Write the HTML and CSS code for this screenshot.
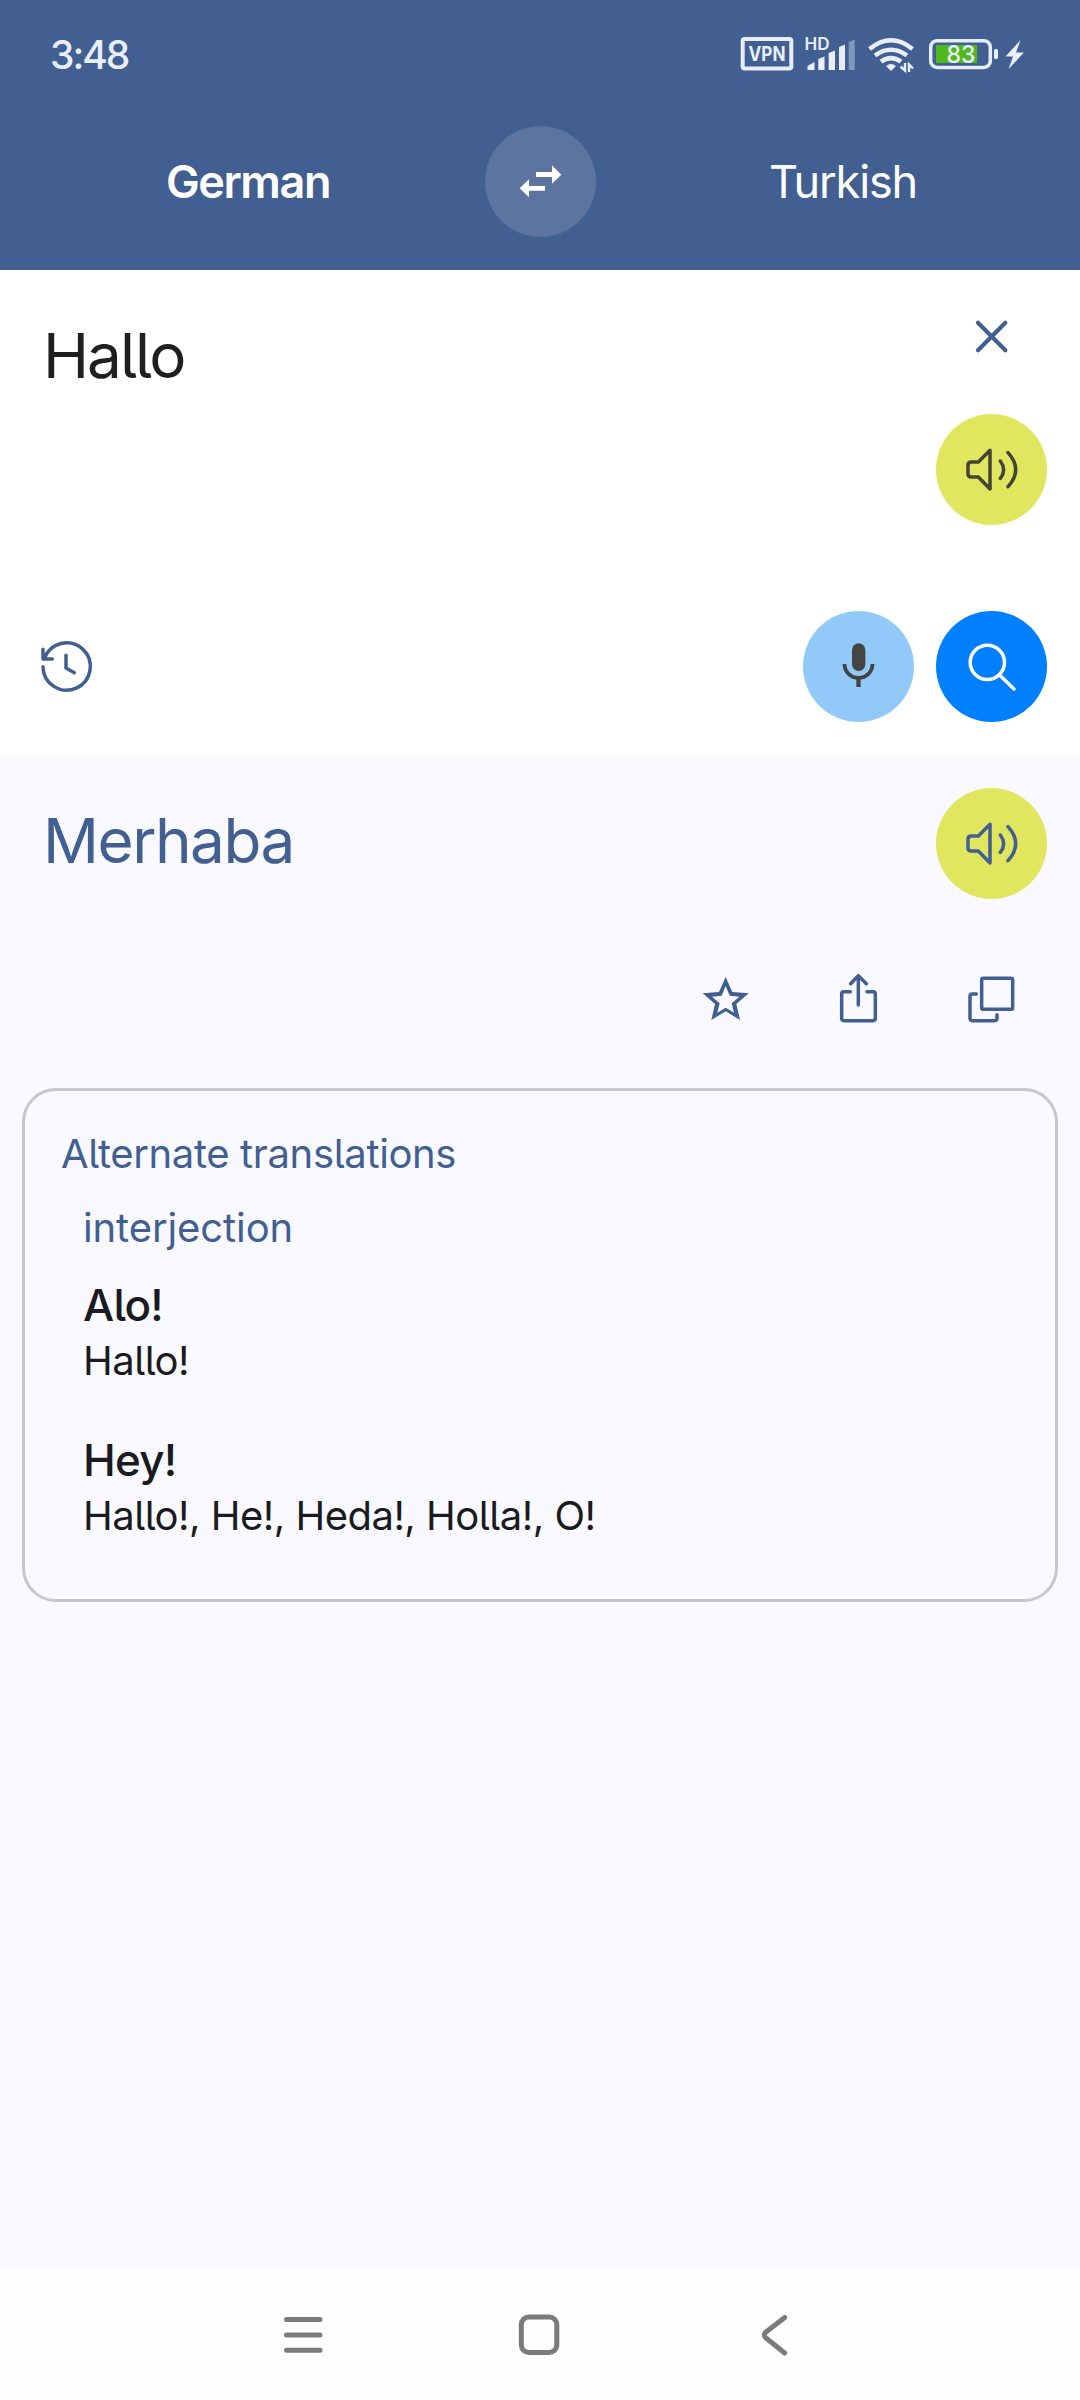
FILE: index.html
```html
<!DOCTYPE html>
<html lang="en">
<head>
<meta charset="utf-8">
<title>Translator</title>
<link rel="stylesheet" href="styles.css">
</head>
<body>
<div class="screen">
  <header class="header">
    <div class="status">
      <span class="time">3:48</span>
      <svg class="status-icons" viewBox="0 0 310 70">
        <rect x="22.7" y="18.9" width="48.6" height="29.6" rx="2" fill="none" stroke="currentColor" stroke-width="4"/>
        <text x="28.5" y="41" class="vpn" textLength="37" lengthAdjust="spacingAndGlyphs">VPN</text>
        <text x="84.5" y="30.2" class="hd" textLength="25" lengthAdjust="spacingAndGlyphs">HD</text>
        <path d="M87.5 50V46L94.5 42V50ZM98.3 50V39L104.5 36.5V50ZM108.7 50V33L115 30.5V50ZM119 50V27L125 24.5V50Z" fill="currentColor"/>
        <path d="M128.7 50V22L134.7 19.5V50Z" fill="currentColor" opacity=".4"/>
        <g fill="none" stroke="currentColor" stroke-width="4.6">
          <path d="M149.5 29Q171 11.5 192.5 29"/>
          <path d="M155 35.5Q171 24 187 35.5"/>
          <path d="M161 41.7Q171 34.5 181 41.7"/>
        </g>
        <path d="M166 46Q171 42 176 46L171 51Z" fill="currentColor"/>
        <path d="M185 43V50.5L180.5 46.5M189 52V44.5L193 48.5" fill="none" stroke="currentColor" stroke-width="2.4"/>
        <rect x="210.7" y="20.7" width="59.6" height="26.8" rx="6.5" fill="none" stroke="currentColor" stroke-width="3.5"/>
        <rect x="216" y="25" width="41" height="18" fill="#4fb81a"/>
        <text x="226.5" y="43" class="charge" textLength="29" lengthAdjust="spacingAndGlyphs">83</text>
        <rect x="274" y="29" width="4" height="10" rx="1.5" fill="currentColor"/>
        <path d="M300.5 20L285.5 36.5H293L288.5 49L304 32.5H296Z" fill="currentColor"/>
      </svg>
    </div>
    <div class="languages">
      <div class="lang lang-from">German</div>
      <svg class="round swap" viewBox="75 78 333 333"><path fill="currentColor" d="M228 216H276V196L304 224L276 251V231H228ZM255 258H207V238L179 265L207 292V272H255Z"/></svg>
      <div class="lang lang-to">Turkish</div>
    </div>
  </header>

  <section class="source">
    <div class="row">
      <p class="word">Hallo</p>
      <div class="stack">
        <svg class="cell" viewBox="108 -27 333 333"><path class="line clear" d="M234 98L316 181M316 98L234 181"/></svg>
        <svg class="round listen dark" viewBox="108 372 333 333"><path class="line" d="M270 481V597L235 561H214Q204 561 204 551V526Q204 516 214 516H235ZM301 513Q321 539 301 565M324 488Q370 539 324 590"/></svg>
      </div>
    </div>
    <div class="row tools">
      <svg class="cell" viewBox="33 3 333 333"><path class="line" d="M129 170A71 71 0 1 0 133 146M129 118V147H157M198 136V174L223 188"/></svg>
      <div class="pair">
        <svg class="round mic" viewBox="69 63 333 333"><rect x="216" y="160" width="40" height="83" rx="20" fill="currentColor"/><path fill="none" stroke="currentColor" stroke-width="11.5" d="M193.5 222A42 42 0 0 0 277.5 222"/><path fill="currentColor" d="M229 262H242V291H229Z"/></svg>
        <svg class="round search" viewBox="468 63 333 333"><circle class="line" cx="622" cy="217" r="51.5"/><path class="line" d="M661 257L702 297"/></svg>
      </div>
    </div>
  </section>

  <section class="result">
    <div class="row">
      <p class="word">Merhaba</p>
      <svg class="round listen" viewBox="108 372 333 333"><path class="line" d="M270 481V597L235 561H214Q204 561 204 551V526Q204 516 214 516H235ZM301 513Q321 539 301 565M324 488Q370 539 324 590"/></svg>
    </div>
    <div class="actions">
      <svg class="cell" viewBox="-30 9 333 333"><path fill="currentColor" fill-rule="evenodd" d="M137 111L157 156L206 160L169 192L180 240L137 214L94 240L105 192L68 160L117 156ZM137 138L149 167L178 170L155 190L162 218L137 203L112 218L119 190L96 170L125 167Z"/></svg>
      <svg class="cell" viewBox="369 9 333 333"><path class="line" d="M511 155H492Q485 155 485 162V235Q485 242 492 242H579Q586 242 586 235V162Q586 155 579 155H561M535 195V108M512 131L535 107L559 131"/></svg>
      <svg class="cell" viewBox="768 9 333 333"><rect class="line" x="905" y="115" width="93" height="93" rx="5"/><path class="line" d="M889 162H877Q870 162 870 169V235Q870 242 877 242H944Q951 242 951 235V224"/></svg>
    </div>
    <div class="card">
      <h2 class="card-title">Alternate translations</h2>
      <h3 class="part">interjection</h3>
      <div class="entry">
        <p class="term">Alo!</p>
        <p class="back">Hallo!</p>
      </div>
      <div class="entry">
        <p class="term">Hey!</p>
        <p class="back">Hallo!, He!, Heda!, Holla!, O!</p>
      </div>
    </div>
  </section>

  <nav class="nav">
    <svg class="nav-icon" viewBox="273 2305 60 60"><path d="M286.5 2319.5H320M286.5 2335H320M286.5 2350.3H320"/></svg>
    <svg class="nav-icon" viewBox="509 2305 60 60"><rect x="521.3" y="2317" width="35.5" height="35.5" rx="7.5"/></svg>
    <svg class="nav-icon" viewBox="745 2305 60 60"><path d="M784.7 2317.5L766 2332Q762.500 2335 766 2338L784.7 2353"/></svg>
  </nav>
</div>
</body>
</html>
```
FILE: styles.css
```css
* { box-sizing: border-box; margin: 0; padding: 0; }
body { font-family: Inter, "Noto Sans", sans-serif; font-feature-settings: "cv05" 1; background: #faf9ff; }
svg { display: block; flex: none; }
.screen { width: 1080px; height: 2400px; display: flex; flex-direction: column; overflow: hidden; color: #415f91; }

.header { height: 270px; background: #415f91; color: #fff; }
.status { height: 126px; padding: 20px 50px 0; display: flex; justify-content: space-between; color: #e9eeff; }
.time { font-size: 39px; font-weight: 500; line-height: 70px; letter-spacing: -2px; }
.status-icons { width: 310px; height: 70px; }
.status-icons text { fill: currentColor; font-weight: 600; }
.status-icons .vpn { font-size: 19.5px; font-weight: 700; }
.hd { font-size: 17px; }
.status-icons .charge { font-size: 24px; font-weight: 500; }
.languages { display: grid; grid-template-columns: 485px 111px 1fr; height: 111px; font-size: 45px; line-height: 111px; text-align: center; }
.lang-from { font-weight: 600; padding-left: 11px; letter-spacing: -1.4px; }
.lang-to { padding-left: 10px; letter-spacing: -1.1px; }

.round, .cell { width: 111px; height: 111px; }
.round { border-radius: 50%; }
.line { fill: none; stroke: currentColor; stroke-width: 10.5; stroke-linecap: round; stroke-linejoin: round; }
.clear { stroke-width: 12.5; }
.swap { background: #5c749f; }
.listen { background: #e1e65f; }
.dark { color: #444336; }
.mic { background: #91caf8; color: #444; }
.search { background: #007fff; color: #fff; }

.row { display: flex; justify-content: space-between; }
.word { font-size: 62px; line-height: 80px; }
.source { height: 485px; padding: 11px 33px 33px 11px; background: #fff; display: flex; flex-direction: column; justify-content: space-between; }
.source .word { padding: 35px 0 0 32px; color: #1f1f1f; letter-spacing: -2px; }
.stack { display: flex; flex-direction: column; gap: 22px; }
.pair { display: flex; gap: 22px; }

.result { flex: 1; padding: 33px 22px 0; }
.result .row, .actions { padding-right: 11px; }
.result .word { padding: 13px 0 0 21px; letter-spacing: -1.5px; }
.actions { display: flex; justify-content: flex-end; gap: 22px; margin-top: 44px; }
.card { margin-top: 34px; height: 514px; border: 3px solid #c5c6d0; border-radius: 34px; padding: 36px 36px 0; }
.card-title, .part, .back { font-size: 40px; font-weight: 400; line-height: 54px; letter-spacing: -0.52px; }
.card-title { letter-spacing: -0.36px; }
.part { margin: 20px 0 0 22px; letter-spacing: -0.1px; }
.entry { margin: 21px 0 0 22px; color: #1a1b20; }
.entry + .entry { margin-top: 43px; }
.term { font-size: 44px; font-weight: 500; line-height: 58px; letter-spacing: -0.8px; }

.nav { height: 130px; background: #fefefe; padding-left: 273px; display: flex; align-items: center; gap: 176px; }
.nav-icon { width: 60px; height: 60px; fill: none; stroke: #7b7b7d; stroke-width: 5; stroke-linecap: round; stroke-linejoin: round; }
```
